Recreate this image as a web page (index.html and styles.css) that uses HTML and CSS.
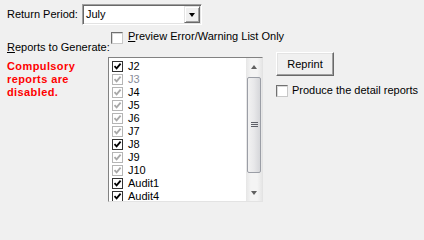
FILE: index.html
```html
<!DOCTYPE html>
<html>
<head>
<meta charset="utf-8">
<link rel="stylesheet" href="styles.css">
</head>
<body>
<div class="form">
  <div class="period-row">
    <span class="label period-label">Return Period:</span>
    <div class="combo">
      <span class="combo-text">July</span>
      <span class="combo-btn"><span class="tri-down"></span></span>
    </div>
  </div>
  <div class="main">
    <div class="left-col">
      <div class="label"><u>R</u>eports to Generate:</div>
      <div class="warning">Compulsory<br>reports are<br>disabled.</div>
    </div>
    <div class="mid-col">
      <div class="preview-row">
        <span class="box"></span>
        <span class="label"><u>P</u>review Error/Warning List Only</span>
      </div>
      <div class="listbox">
        <div class="items">
          <div class="item"><span class="lbox on"><svg viewBox="0 0 9 9"><path d="M1.5 4.2 L3.6 6.4 L7.6 1.6"/></svg></span><span>J2</span></div>
          <div class="item gray-text"><span class="lbox dis"><svg viewBox="0 0 9 9"><path d="M1.5 4.2 L3.6 6.4 L7.6 1.6"/></svg></span><span>J3</span></div>
          <div class="item"><span class="lbox dis"><svg viewBox="0 0 9 9"><path d="M1.5 4.2 L3.6 6.4 L7.6 1.6"/></svg></span><span>J4</span></div>
          <div class="item"><span class="lbox dis"><svg viewBox="0 0 9 9"><path d="M1.5 4.2 L3.6 6.4 L7.6 1.6"/></svg></span><span>J5</span></div>
          <div class="item"><span class="lbox dis"><svg viewBox="0 0 9 9"><path d="M1.5 4.2 L3.6 6.4 L7.6 1.6"/></svg></span><span>J6</span></div>
          <div class="item"><span class="lbox dis"><svg viewBox="0 0 9 9"><path d="M1.5 4.2 L3.6 6.4 L7.6 1.6"/></svg></span><span>J7</span></div>
          <div class="item"><span class="lbox on"><svg viewBox="0 0 9 9"><path d="M1.5 4.2 L3.6 6.4 L7.6 1.6"/></svg></span><span>J8</span></div>
          <div class="item"><span class="lbox dis"><svg viewBox="0 0 9 9"><path d="M1.5 4.2 L3.6 6.4 L7.6 1.6"/></svg></span><span>J9</span></div>
          <div class="item"><span class="lbox dis"><svg viewBox="0 0 9 9"><path d="M1.5 4.2 L3.6 6.4 L7.6 1.6"/></svg></span><span>J10</span></div>
          <div class="item"><span class="lbox on"><svg viewBox="0 0 9 9"><path d="M1.5 4.2 L3.6 6.4 L7.6 1.6"/></svg></span><span>Audit1</span></div>
          <div class="item"><span class="lbox on"><svg viewBox="0 0 9 9"><path d="M1.5 4.2 L3.6 6.4 L7.6 1.6"/></svg></span><span>Audit4</span></div>
        </div>
        <div class="scrollbar">
          <div class="sb-btn"><span class="sb-up"></span></div>
          <div class="sb-track">
            <div class="sb-thumb"><span class="grip"></span></div>
          </div>
          <div class="sb-btn"><span class="sb-down"></span></div>
        </div>
      </div>
    </div>
    <div class="right-col">
      <button class="btn">Reprint</button>
      <div class="detail-row">
        <span class="box"></span>
        <span class="label">Produce the detail reports</span>
      </div>
    </div>
  </div>
</div>
</body>
</html>
```
FILE: styles.css
```css
html, body {
  margin: 0;
  padding: 0;
  background: #f0f0f0;
}
body {
  font-family: "Liberation Sans", Arial, sans-serif;
  font-size: 11px;
  line-height: 13px;
  color: #000;
  width: 424px;
  height: 213px;
  overflow: hidden;
}
.form {
  display: flex;
  flex-direction: column;
}
.label {
  white-space: nowrap;
}
.period-row {
  display: flex;
  align-items: center;
  margin-top: 4px;
  padding-left: 7px;
  height: 21px;
}
.period-label {
  width: 75px;
}
.combo {
  box-sizing: border-box;
  width: 120px;
  height: 21px;
  background: #fff;
  border: 1px solid;
  border-color: #a0a0a0 #fff #fff #a0a0a0;
  box-shadow: inset 1px 1px 0 #696969, inset -1px -1px 0 #e3e3e3;
  display: flex;
  align-items: center;
  padding: 2px 1px 2px 3px;
}
.combo-text {
  flex: 1;
}
.combo-btn {
  box-sizing: border-box;
  width: 16px;
  height: 17px;
  background: #f0f0f0;
  border: 1px solid;
  border-color: #e3e3e3 #696969 #696969 #e3e3e3;
  box-shadow: inset 1px 1px 0 #fff, inset -1px -1px 0 #a0a0a0;
  display: flex;
  align-items: center;
  justify-content: center;
}
.tri-down {
  width: 0;
  height: 0;
  border-left: 3.5px solid transparent;
  border-right: 3.5px solid transparent;
  border-top: 4px solid #000;
}
.main {
  display: flex;
  margin-top: 6px;
}
.left-col {
  width: 101px;
  padding-left: 7px;
  padding-top: 10px;
}
.warning {
  margin-top: 6px;
  color: #ff0000;
  font-weight: bold;
  letter-spacing: 0.4px;
}
.mid-col {
  width: 155px;
  display: flex;
  flex-direction: column;
}
.preview-row {
  height: 26px;
  display: flex;
  align-items: flex-start;
  padding-left: 3px;
}
.box {
  box-sizing: border-box;
  width: 12px;
  height: 12px;
  background: #fff;
  border: 1px solid;
  border-color: #707070 #c8c8c8 #c8c8c8 #707070;
  box-shadow: inset 1px 1px 0 #d8d8d8;
  margin-top: 1px;
  margin-right: 5px;
  flex: none;
}
.preview-row .label {
  margin-top: -1px;
}
.listbox {
  box-sizing: border-box;
  width: 155px;
  height: 145px;
  background: #fff;
  border: 1px solid;
  border-color: #828282 #e3e3e3 #e3e3e3 #828282;
  display: flex;
  overflow: hidden;
}
.items {
  flex: 1;
  padding-top: 2px;
  padding-left: 3px;
  overflow: hidden;
}
.item {
  height: 13px;
  display: flex;
  align-items: center;
  white-space: nowrap;
}
.gray-text {
  color: #8a8d9a;
}
.lbox {
  box-sizing: border-box;
  width: 11px;
  height: 11px;
  border: 1px solid #333;
  background: #fff;
  margin-right: 5px;
  display: flex;
  align-items: center;
  justify-content: center;
  flex: none;
}
.lbox svg {
  width: 9px;
  height: 9px;
  display: block;
}
.lbox path {
  fill: none;
  stroke: #000;
  stroke-width: 1.8;
}
.lbox.dis {
  border-color: #b5b5b5;
}
.lbox.dis path {
  stroke: #a8a8a8;
}
.scrollbar {
  width: 16px;
  display: flex;
  flex-direction: column;
  background: #eeeeee;
  background-image: linear-gradient(90deg, #e6e6e6 0, #f4f4f4 30%, #f4f4f4 70%, #e6e6e6 100%);
}
.sb-btn {
  height: 17px;
  display: flex;
  align-items: center;
  justify-content: center;
  flex: none;
}
.sb-up {
  width: 0;
  height: 0;
  border-left: 3.5px solid transparent;
  border-right: 3.5px solid transparent;
  border-bottom: 4px solid #606060;
}
.sb-down {
  width: 0;
  height: 0;
  border-left: 3.5px solid transparent;
  border-right: 3.5px solid transparent;
  border-top: 4px solid #606060;
}
.sb-track {
  flex: 1;
  padding-top: 2px;
}
.sb-thumb {
  box-sizing: border-box;
  margin: 0 1px;
  height: 96px;
  border: 1px solid #9b9ea6;
  border-radius: 2px;
  background: linear-gradient(90deg, #f2f2f2 0%, #e8e8ea 50%, #d6d7da 100%);
  display: flex;
  align-items: center;
  justify-content: center;
}
.grip {
  width: 7px;
  height: 6px;
  background: repeating-linear-gradient(180deg, #5e6068 0, #5e6068 1px, transparent 1px, transparent 2px);
}
.right-col {
  margin-left: 13px;
  display: flex;
  flex-direction: column;
  align-items: flex-start;
}
.btn {
  box-sizing: border-box;
  margin-top: 21px;
  width: 58px;
  height: 24px;
  font: inherit;
  color: #000;
  background: #f0f0f0;
  border: 1px solid;
  border-color: #fff #696969 #696969 #fff;
  box-shadow: inset -1px -1px 0 #a0a0a0, inset 1px 1px 0 #e3e3e3;
  padding: 0;
}
.detail-row {
  display: flex;
  align-items: flex-start;
  margin-top: 8px;
}
.detail-row .box {
  margin-top: 1px;
  margin-right: 4px;
}
.detail-row .label {
  margin-top: 0;
}
```
